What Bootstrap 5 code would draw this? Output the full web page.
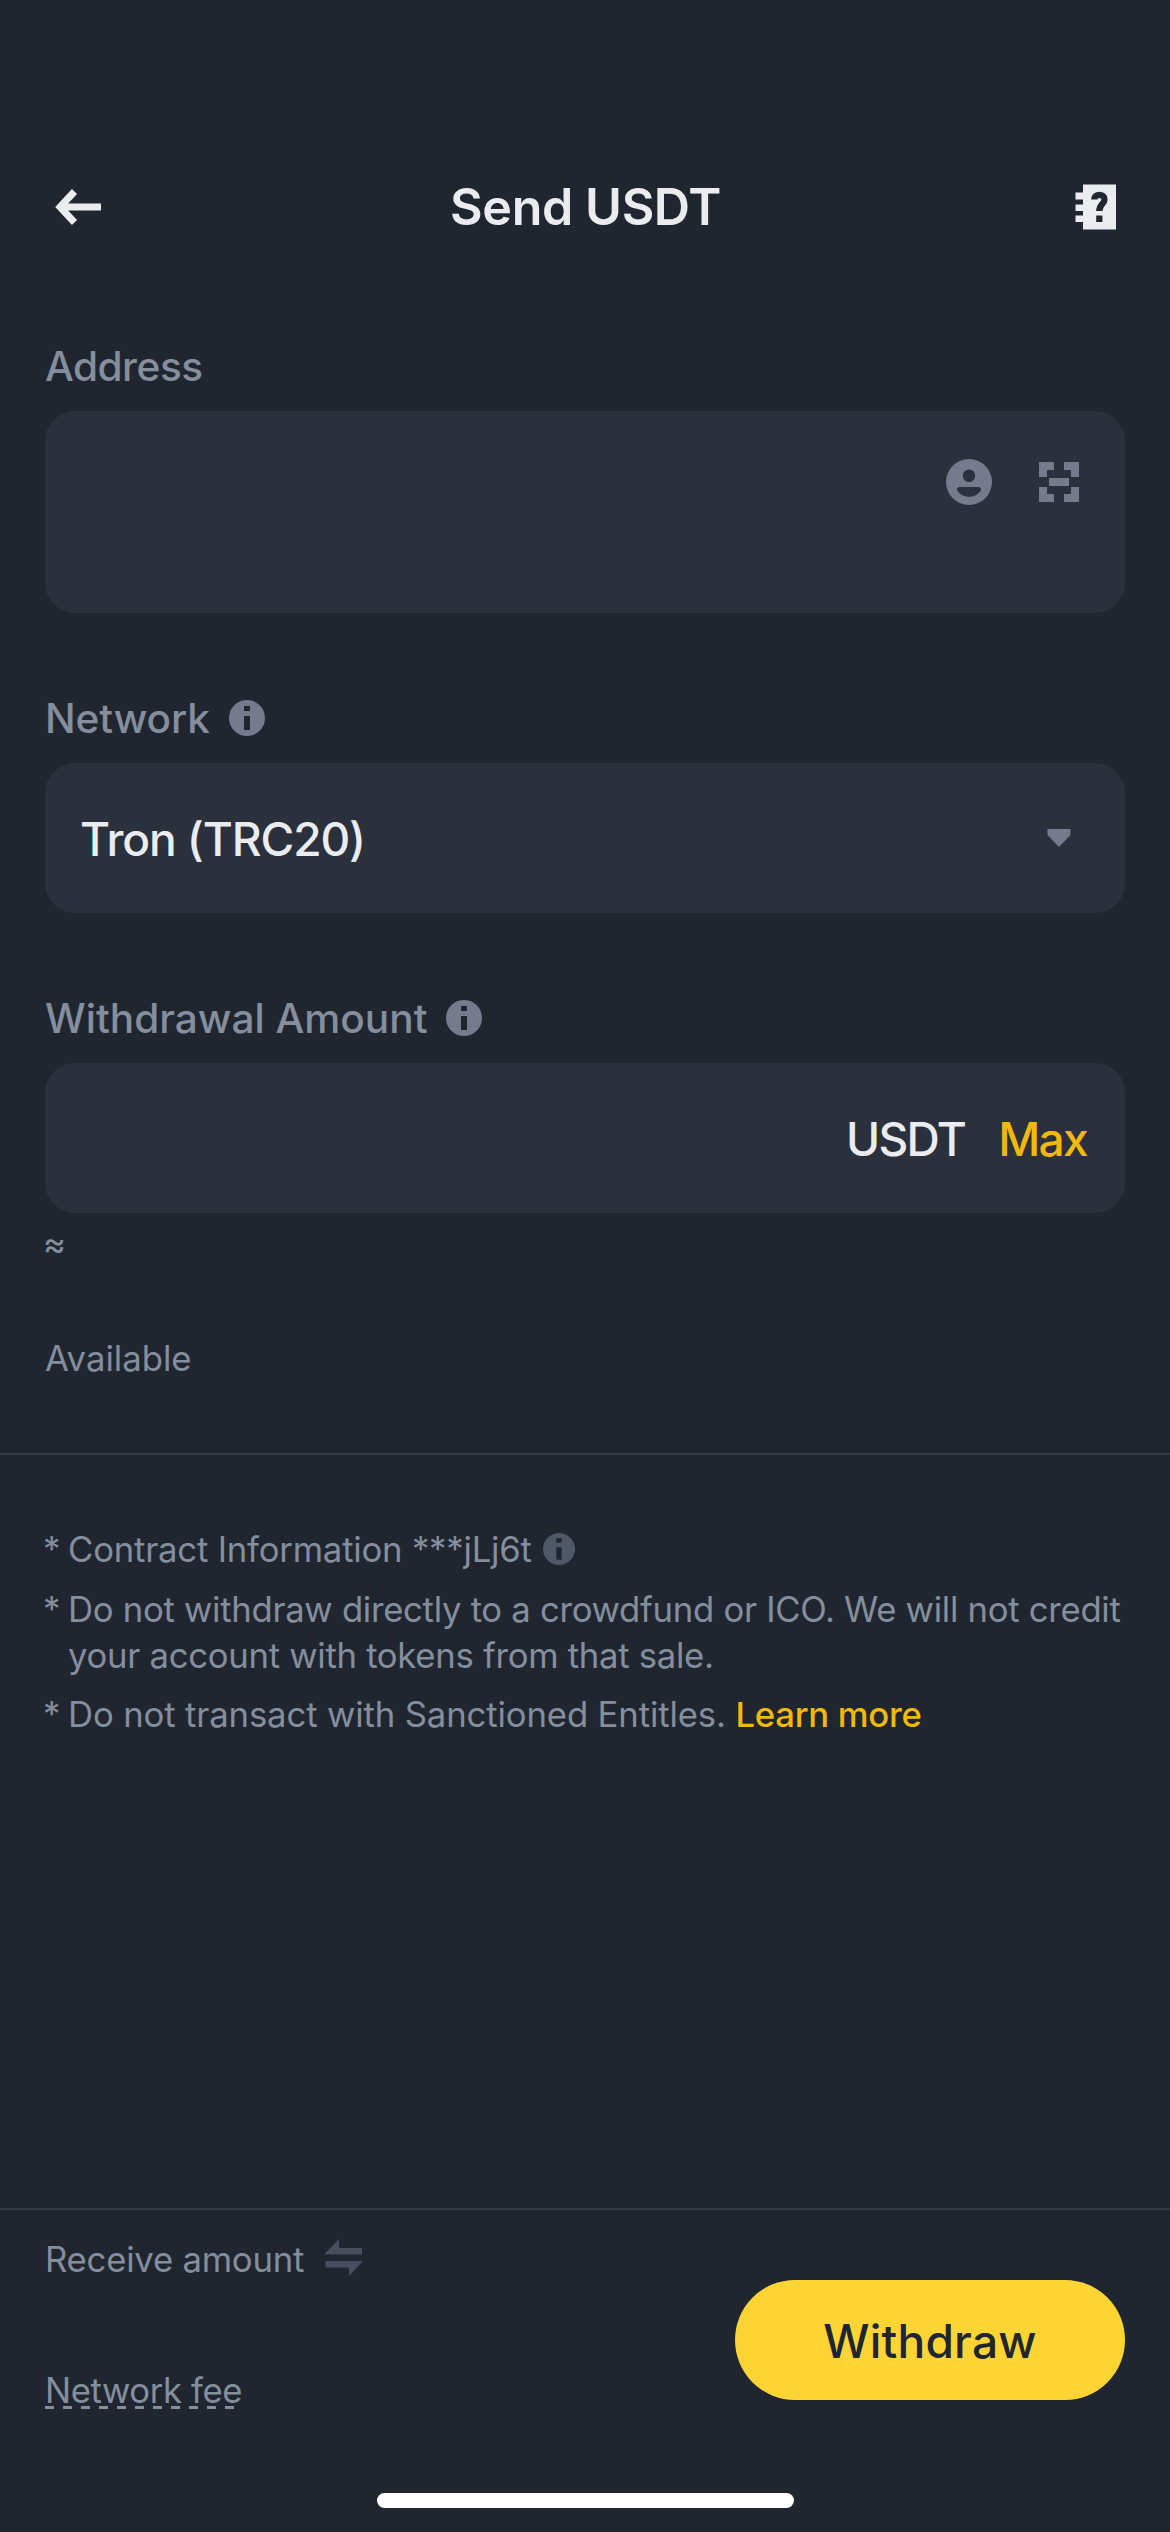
<!DOCTYPE html>
<html lang="en" data-bs-theme="dark">
<head>
<meta charset="utf-8">
<meta name="viewport" content="width=device-width, initial-scale=1">
<title>Send USDT</title>
<link href="https://cdn.jsdelivr.net/npm/bootstrap@5.3.0/dist/css/bootstrap.min.css" rel="stylesheet">
<style>
  body { background: #202630; color: #eaecef; font-family: Inter, "Liberation Sans", sans-serif; }
  svg { display: block; flex: none; }
  .screen { width: 1170px; height: 2532px; padding-top: 132px; overflow: hidden; }
  .topbar { height: 150px; padding: 0 54px 0 55px; }
  .topbar h1 { font-size: 50.2px; font-weight: 600; letter-spacing: -.4px; line-height: 1; color: #eaecef; }
  .side { width: 46px; }
  .form-area { padding: 55px 45px 0; }
  .field-label { height: 60px; margin-bottom: 14px; font-size: 40.6px; font-weight: 500; line-height: 60px; color: #848e9c; }
  .label-address { letter-spacing: -.5px; }
  .label-network { letter-spacing: -.1px; }
  .info-icon { margin: -2px 0 0 19px; color: #737b8c; }
  .field { height: 150px; margin-bottom: 76px; padding-top: 4px; border-radius: 30px; background: #2b313c; font-size: 46.1px; font-weight: 500; }
  .field-address { height: 202px; padding: 48px 46px 0 0; gap: 47px; }
  .scan-icon { margin-top: 3px; }
  .network-name { padding-left: 35px; letter-spacing: -1.1px; }
  .caret-icon { margin: -4px 54px 0 0; }
  .unit { letter-spacing: -1.7px; }
  .max-link { margin: 0 38px 0 33px; letter-spacing: -1.7px; color: #f0b90b; }
  .small-text { font-size: 34.7px; line-height: 50px; color: #848e9c; }
  .approx { margin: 5px 0 0 -2px; }
  .available { margin-top: 65px; }
  .rule { height: 2px; margin-top: 70px; background: #333b47; }
  .notes { padding: 71px 40px 0 45px; font-size: 34.7px; line-height: 46px; color: #848e9c; }
  .star { width: 25px; margin-left: -2px; flex: none; }
  .note-contract { letter-spacing: -.2px; }
  .note-crowdfund { letter-spacing: -.29px; }
  .note-sanction { letter-spacing: -.13px; }
  .gap-a { margin-top: 14px; }
  .gap-b { margin-top: 13px; }
  .info-small { margin-left: 11px; color: #4f5867; }
  .learn { color: #f0b90b; font-weight: 500; letter-spacing: -.28px; }
  .bottom { height: 324px; border-top: 2px solid #333b47; padding: 24px 45px 0; }
  .receive { letter-spacing: -.23px; }
  .swap-icon { margin: -3px 0 0 21px; }
  .fee { margin-top: 81px; letter-spacing: -.4px; }
  .dashes { height: 3px; width: 194px; margin-top: -9px; background: repeating-linear-gradient(90deg, #848e9c 0 9px, transparent 9px 18px); }
  .btn-withdraw, .btn-withdraw:hover { width: 390px; height: 120px; margin-top: 46px; border: 0; border-radius: 60px; background: #fcd535; color: #202630; font-size: 46.1px; font-weight: 500; letter-spacing: .2px; padding: 3px 0 0; }
  .home-bar { width: 417px; height: 15px; margin-bottom: 24px; border-radius: 8px; background: #fff; }
</style>
</head>
<body>
<svg class="d-none" aria-hidden="true">
  <symbol id="info" viewBox="0 0 36 36"><path fill="currentColor" fill-rule="evenodd" d="M18 0a18 18 0 1 0 0 36a18 18 0 1 0 0-36zM15 6h6v5h-6zM15 16h6v14h-6z"/></symbol>
</svg>
<main class="screen d-flex flex-column">
  <header class="topbar d-flex align-items-center justify-content-between">
    <div class="side">
      <svg width="46" height="36" viewBox="0 0 46 36"><path d="M46 18H5M19.500 2.500L5 18l14.500 15.500" fill="none" stroke="#eaecef" stroke-width="7"/></svg>
    </div>
    <h1 class="m-0">Send USDT</h1>
    <div class="side d-flex justify-content-end">
      <svg width="41" height="46" viewBox="0 0 41 46"><path fill="#eaecef" d="M8 .4h33v45.200H8V38H.5v-6.500H8V27H.5v-6.500H8V15.500H.5V8.500H8z"/><path d="M19.200 15.500c.2-6 10.300-6.200 10.300 0c0 4.500-5.200 4.500-5.200 11.500" fill="none" stroke="#202630" stroke-width="6.300"/><path fill="#202630" d="M21.200 31.500h6.200v6.500h-6.200z"/></svg>
    </div>
  </header>

  <section class="form-area">
    <div class="field-label label-address">Address</div>
    <div class="field field-address d-flex justify-content-end align-items-start">
      <svg width="46" height="46" viewBox="0 0 46 46"><path fill="#737b8c" fill-rule="evenodd" d="M23 0a23 23 0 1 0 0 46a23 23 0 1 0 0-46zM23 10.400a6.300 6.300 0 1 1 0 12.600a6.300 6.300 0 1 1 0-12.600zM14 28h18c3 0 3.800 2.500 2.300 4.300c-5.500 7.400-17.100 7.400-22.600 0C10.200 30.500 11 28 14 28z"/></svg>
      <svg class="scan-icon" width="40" height="40" viewBox="0 0 40 40"><path fill="#737b8c" d="M0 0h15v8H8v7H0zM25 0h15v15h-8V8h-7zM0 25h8v7h7v8H0zM32 25h8v15H25v-8h7zM10 16h20v8H10z"/></svg>
    </div>

    <div class="field-label d-flex align-items-center"><span class="label-network">Network</span><svg class="info-icon" width="36" height="36"><use href="#info"/></svg></div>
    <div class="field d-flex align-items-center justify-content-between">
      <span class="network-name">Tron (TRC20)</span>
      <svg class="caret-icon" width="24" height="18" viewBox="0 0 24 18"><path fill="#737b8c" d="M.5 0h23v6L12 18L.5 6z"/></svg>
    </div>

    <div class="field-label d-flex align-items-center"><span>Withdrawal Amount</span><svg class="info-icon" width="36" height="36"><use href="#info"/></svg></div>
    <div class="field mb-0 d-flex align-items-center justify-content-end">
      <span class="unit">USDT</span>
      <span class="max-link">Max</span>
    </div>
    <div class="small-text approx">≈</div>
    <div class="small-text available">Available</div>
  </section>

  <div class="rule"></div>

  <section class="notes">
    <div class="d-flex align-items-center"><span class="star">*</span><span class="note-contract">Contract Information ***jLj6t</span><svg class="info-small" width="32" height="32"><use href="#info"/></svg></div>
    <div class="d-flex gap-a"><span class="star">*</span><span class="text-nowrap note-crowdfund">Do not withdraw directly to a crowdfund or ICO. We will not credit<br>your account with tokens from that sale.</span></div>
    <div class="d-flex gap-b"><span class="star">*</span><span class="text-nowrap note-sanction">Do not transact with Sanctioned Entitles. <span class="learn">Learn more</span></span></div>
  </section>

  <footer class="bottom mt-auto d-flex flex-column align-items-stretch">
    <div class="d-flex justify-content-between align-items-start">
      <div>
        <div class="small-text d-flex align-items-center"><span class="receive">Receive amount</span>
          <svg class="swap-icon" width="38" height="40" viewBox="0 0 38 40"><path fill="#474f5e" d="M0 15.500L14 1v9h23v6.500H0zM.5 23H38L24 38v-8.500H.5z"/></svg></div>
        <div class="small-text fee">Network fee</div>
        <div class="dashes"></div>
      </div>
      <button class="btn btn-withdraw" type="button">Withdraw</button>
    </div>
    <div class="home-bar mx-auto mt-auto"></div>
  </footer>
</main>
<script src="https://cdn.jsdelivr.net/npm/bootstrap@5.3.0/dist/js/bootstrap.bundle.min.js"></script>
</body>
</html>
